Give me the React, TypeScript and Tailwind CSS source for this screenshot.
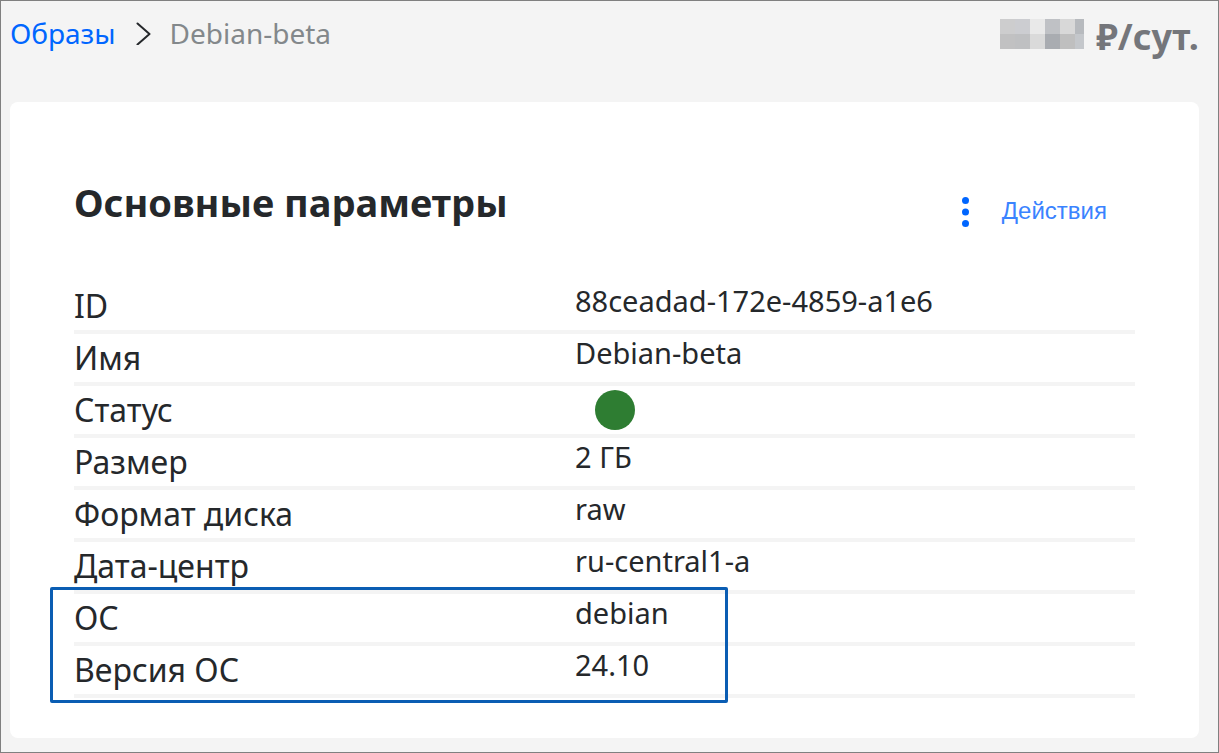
import React from 'react';

const parameters = [
  { label: 'ID', value: '88ceadad-172e-4859-a1e6' },
  { label: 'Имя', value: 'Debian-beta' },
  { label: 'Статус', status: 'active' },
  { label: 'Размер', value: '2 ГБ' },
  { label: 'Формат диска', value: 'raw' },
  { label: 'Дата-центр', value: 'ru-central1-a' },
  { label: 'ОС', value: 'debian' },
  { label: 'Версия ОС', value: '24.10' },
];

const HiddenPrice = () => (
  <svg width="84" height="30" viewBox="0 0 84 30" shapeRendering="crispEdges" aria-hidden="true">
    <rect width="15" height="15" fill="#cdcdce" />
    <rect x="15" width="15" height="15" fill="#cccdd1" />
    <rect x="30" width="15" height="15" fill="#e9e9e9" />
    <rect x="45" width="15" height="15" fill="#bfc1c5" />
    <rect x="60" width="15" height="15" fill="#d8d8d8" />
    <rect x="75" width="9" height="15" fill="#b7babe" />
    <rect y="15" width="15" height="15" fill="#c1c1c2" />
    <rect x="15" y="15" width="15" height="15" fill="#bfc0c2" />
    <rect x="30" y="15" width="15" height="15" fill="#dadada" />
    <rect x="45" y="15" width="15" height="15" fill="#a9acb1" />
    <rect x="60" y="15" width="15" height="15" fill="#bfbfbf" />
    <rect x="75" y="15" width="9" height="15" fill="#c4c7cb" />
  </svg>
);

const Header = () => (
  <header className="flex items-start justify-between">
    <nav className="flex items-center pt-3 text-[28px] leading-10" aria-label="Навигация">
      <a href="#images" className="text-[#0066ff]">Образы</a>
      <svg className="mr-[18px] ml-[18px]" width="18" height="24" viewBox="0 0 18 24" fill="none" aria-hidden="true">
        <path d="M3.5 2.5L15.5 13L3.5 23.5" stroke="#25282b" strokeWidth="2" strokeLinecap="round" strokeLinejoin="round" />
      </svg>
      <span className="text-[#83888b]">Debian-beta</span>
    </nav>
    <div className="flex items-start gap-3 pt-2 text-[#74767b]">
      <div className="pt-2.5">
        <HiddenPrice />
      </div>
      <span className="text-[36px] leading-14 font-bold">₽/сут.</span>
    </div>
  </header>
);

const ParametersTable = () => (
  <div className="relative">
    <table className="w-full table-fixed border-separate border-spacing-0 text-left">
      <tbody>
        {parameters.map((p) => (
          <tr key={p.label} className="h-[52px]">
            <th scope="row" className="w-[501px] border-b-4 border-[#f4f4f4] p-0 align-top text-[32px] leading-[48px] font-normal">
              {p.label}
            </th>
            <td className="border-b-4 border-[#f4f4f4] p-0 align-top text-[29px] leading-[38px]">
              {p.status ? (
                <span className="mt-1 ml-5 block size-10 rounded-full bg-[#2e7d32]" role="img" aria-label="Активен" />
              ) : (
                p.value
              )}
            </td>
          </tr>
        ))}
      </tbody>
    </table>
    {/* frame around the OS rows */}
    <div className="pointer-events-none absolute -bottom-[5px] -left-6 h-[116px] w-[678px] rounded-xs border-[3px] border-[#0a5db3]" />
  </div>
);

export default function App() {
  return (
    <div className="min-h-screen border border-[#808080] bg-[#f4f4f4] pr-[19px] pb-3.5 pl-[9px] font-['Noto_Sans',sans-serif] text-[#25282b]">
      <Header />
      <main className="mt-[37px] rounded-lg bg-white px-16 pt-[72px] pb-10">
        <div className="mb-[52px] flex items-center justify-between pr-7">
          <h1 className="text-[38px] leading-14 font-bold">Основные параметры</h1>
          <button type="button" className="flex items-center gap-8 pt-[18px] font-['Liberation_Sans',sans-serif] text-2xl text-[#3a83ff]">
            <svg width="8" height="32" viewBox="0 0 8 32" fill="#0066ff" aria-hidden="true">
              <circle cx="3.5" cy="5.5" r="3.5" />
              <circle cx="3.5" cy="17" r="3.5" />
              <circle cx="3.5" cy="28.5" r="3.5" />
            </svg>
            Действия
          </button>
        </div>
        <ParametersTable />
      </main>
    </div>
  );
}
